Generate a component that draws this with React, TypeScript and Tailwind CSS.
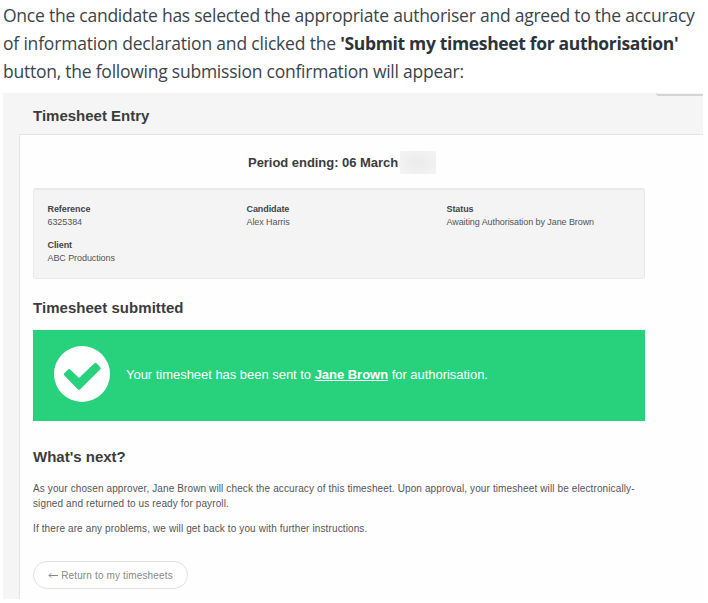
const DETAILS = [
  { label: "Reference", value: "6325384" },
  { label: "Candidate", value: "Alex Harris" },
  { label: "Status", value: "Awaiting Authorisation by Jane Brown" },
  { label: "Client", value: "ABC Productions" },
];

function Intro() {
  return (
    <div className="h-[93px] pl-[3px] pt-px font-['Open_Sans',sans-serif] text-[17.5px] leading-7 tracking-[-0.24px] whitespace-nowrap text-[#3b444b]">
      <p>Once the candidate has selected the appropriate authoriser and agreed to the accuracy</p>
      <p className="tracking-[-0.19px]">
        of information declaration and clicked the{" "}
        <strong className="font-bold tracking-[-0.34px] text-[#2c343b]">
          'Submit my timesheet for authorisation'
        </strong>
      </p>
      <p>button, the following submission confirmation will appear:</p>
    </div>
  );
}

function Details() {
  return (
    <dl className="mt-[14px] grid h-[91px] w-[612px] grid-cols-[199px_200px_1fr] content-start gap-y-[10px] rounded-[3px] border border-t-2 border-[#e9e9e9] bg-[#f4f4f4] pl-[13.5px] pt-[13px] text-[9px] leading-[13px] tracking-[-0.08px]">
      {DETAILS.map((d) => (
        <div key={d.label}>
          <dt className="font-bold text-[#444]">{d.label}</dt>
          <dd className="text-[#555]">{d.value}</dd>
        </div>
      ))}
    </dl>
  );
}

function SuccessBanner() {
  return (
    <div className="mt-[13px] flex h-[91px] w-[612px] items-center bg-[#28d17c] pl-[21px] text-white">
      <svg className="-mt-[3px] h-14 w-14 shrink-0" viewBox="0 0 56 56">
        <circle cx="28" cy="28" r="28" fill="#fff" />
        <path
          d="M10.2 27.3L14.2 23.4Q15.2 22.5 16.2 23.4L25 32L40.4 17.3Q41.5 16.4 42.6 17.3L46.3 21.2Q47.2 22.2 46.3 23.2L26 43.4Q25 44.2 24 43.4L10.2 29.3Q9.3 28.3 10.2 27.3Z"
          fill="#28d17c"
        />
      </svg>
      <p className="-mt-[2px] ml-4 text-[13px] tracking-[-0.03px] whitespace-nowrap">
        Your timesheet has been sent to{" "}
        <a href="#" className="font-bold underline">
          Jane Brown
        </a>{" "}
        for authorisation.
      </p>
    </div>
  );
}

export default function App() {
  return (
    <div className="h-[603px] overflow-hidden bg-white">
      <Intro />
      <main className="ml-[3px] h-[506px] w-[700px] bg-[#f5f5f5] font-['Liberation_Sans',Arial,sans-serif] text-[#3c3c3c]">
        <div className="flex h-[41px] justify-between">
          <h1 className="pl-[30px] pt-[13px] text-[15px] leading-5 font-bold">Timesheet Entry</h1>
          <div className="h-[3px] w-[47px] rounded-bl-[3px] border-b-2 border-[#d5d5d5]" />
        </div>
        <section className="ml-4 h-[465px] border-t border-l border-[#e4e4e4] bg-[#fefefe] pl-[13px]">
          <div className="flex items-center pl-[215px] pt-[16px]">
            <h2 className="text-[13px] leading-[23px] font-bold tracking-[-0.04px] whitespace-nowrap">
              Period ending: 06 March
            </h2>
            <div className="ml-[2px] h-[23px] w-9 bg-[radial-gradient(#ebebeb,#f4f4f4)]" />
          </div>
          <Details />
          <h2 className="mt-[19px] -mb-px text-[15px] leading-5 font-bold tracking-[0.04px]">
            Timesheet submitted
          </h2>
          <SuccessBanner />
          <h2 className="mt-[26px] text-[15px] leading-5 font-bold">What's next?</h2>
          <div className="mt-[14px] text-[10px] leading-[15px] tracking-[0.12px] whitespace-nowrap text-[#555]">
            <p>
              As your chosen approver, Jane Brown will check the accuracy of this timesheet. Upon approval, your timesheet will be electronically-
              <br />
              signed and returned to us ready for payroll.
            </p>
            <p className="mt-[10px]">
              If there are any problems, we will get back to you with further instructions.
            </p>
          </div>
          <button
            type="button"
            className="mt-[25px] flex h-[28px] w-[155px] items-center justify-center rounded-full border border-[#e2e2e2] bg-white text-[10px] tracking-[0.14px] whitespace-nowrap text-[#888]"
          >
            <svg className="mr-[3px] h-[7px] w-[10px]" viewBox="0 0 10 7" fill="none" stroke="currentColor">
              <path d="M10 3.5H1M3.2 1.3L1 3.5l2.2 2.2" />
            </svg>
            Return to my timesheets
          </button>
        </section>
      </main>
    </div>
  );
}
